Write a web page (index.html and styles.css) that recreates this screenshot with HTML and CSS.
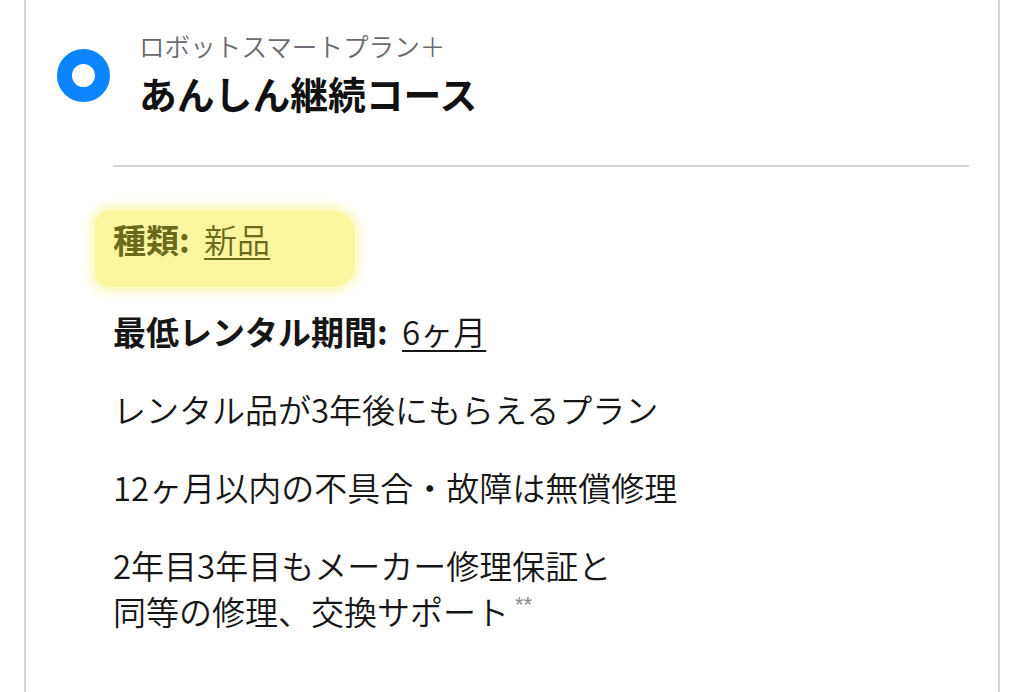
FILE: index.html
```html
<!DOCTYPE html>
<html lang="ja">
<head>
<meta charset="utf-8">
<link rel="stylesheet" href="styles.css">
</head>
<body>
<div class="card">
  <div class="header">
    <div class="radio"></div>
    <div class="titles">
      <div class="subtitle">ロボットスマートプラン＋</div>
      <div class="title">あんしん継続コース</div>
    </div>
  </div>
  <div class="divider"></div>
  <div class="body">
    <div class="highlight"><span class="label">種類:</span> <span class="link">新品</span></div>
    <p class="row first"><span class="label">最低レンタル期間:</span> <span class="link">6ヶ月</span></p>
    <p class="row">レンタル品が3年後にもらえるプラン</p>
    <p class="row">12ヶ月以内の不具合・故障は無償修理</p>
    <p class="row">2年目3年目もメーカー修理保証と<br>同等の修理、交換サポート<sup class="note">**</sup></p>
  </div>
</div>
</body>
</html>
```

FILE: styles.css
```css
html, body {
  margin: 0;
  padding: 0;
  background: #ffffff;
  height: 100%;
}
body {
  font-family: "Noto Sans CJK JP", "Noto Sans", sans-serif;
  color: #161616;
  overflow: hidden;
}
.card {
  margin-left: 24px;
  width: 972px;
  height: 692px;
  border-left: 2px solid #d3d3d8;
  border-right: 2px solid #d3d3d8;
}
.header {
  display: flex;
  align-items: center;
  padding-top: 31px;
  padding-left: 31px;
}
.radio {
  width: 53px;
  height: 53px;
  box-sizing: border-box;
  border-radius: 50%;
  border: 15.5px solid #0a84ff;
  background: #ffffff;
  margin-top: 4px;
  margin-right: 29px;
  flex: none;
}
.titles {
  display: flex;
  flex-direction: column;
}
.subtitle {
  font-size: 25.6px;
  line-height: 30px;
  color: #6b6b70;
  font-weight: 350;
}
.title {
  font-size: 37.8px;
  line-height: 44px;
  font-weight: 700;
  margin-top: 10px;
  color: #111111;
}
.divider {
  height: 2px;
  background: #d6d6da;
  margin: 50px 29px 0 87px;
}
.body {
  padding-top: 41px;
}
.highlight {
  display: inline-block;
  margin-left: 69px;
  width: 260px;
  box-sizing: border-box;
  padding: 6px 0 25px 18px;
  margin-top: 2px;
  font-size: 33px;
  line-height: 46px;
  color: #6a6a1c;
  font-weight: 350;
  background: #faf6a0;
  border-radius: 16px 24px 22px 14px;
  box-shadow: 0 0 10px 5px #fcf9bb;
}
.label {
  font-weight: 700;
}
.link {
  margin-left: 7px;
  text-decoration: underline;
  text-decoration-thickness: 2px;
  text-underline-offset: 5px;
}
.row {
  margin: 32px 0 0 87px;
  font-size: 33px;
  line-height: 46px;
  font-weight: 350;
}
.row.first {
  margin-top: 21px;
}
.note {
  font-family: "Liberation Sans", sans-serif;
  font-size: 22px;
  line-height: 0;
  color: #8a8a90;
  vertical-align: 13px;
  margin-left: 6px;
}
```
